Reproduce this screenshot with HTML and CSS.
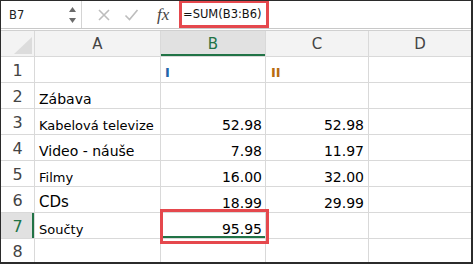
FILE: index.html
```html
<!DOCTYPE html>
<html lang="cs">
<head>
    <meta charset="UTF-8">
    <meta name="viewport" content="width=device-width, initial-scale=1.0">
    <title>Součty</title>
    <link rel="stylesheet" href="styles.css">
</head>
<body>
    <div class="sheet">
        <div class="formula-bar">
            <div class="name-box">
                <span class="name">B7</span>
                <svg class="spin" width="9" height="18" viewBox="0 0 9 18">
                    <path d="M4.5 1 L8 6 L1 6 Z" fill="#6b6b6b"/>
                    <path d="M1 12 L8 12 L4.5 17 Z" fill="#6b6b6b"/>
                </svg>
            </div>
            <div class="tools">
                <svg class="icon" width="14" height="14" viewBox="0 0 14 14">
                    <path d="M2 2 L12 12 M12 2 L2 12" stroke="#bdbdbd" stroke-width="1.6" fill="none"/>
                </svg>
                <svg class="icon" width="15" height="14" viewBox="0 0 15 14">
                    <path d="M1.5 7.5 L5.5 11.5 L13.5 2" stroke="#bdbdbd" stroke-width="1.6" fill="none"/>
                </svg>
                <span class="fx">fx</span>
            </div>
            <div class="formula">
                <span class="formula-text">=SUM(B3:B6)</span>
            </div>
        </div>

        <div class="grid">
            <div class="corner">
                <svg width="18" height="17" viewBox="0 0 18 17"><path d="M18 0 L18 17 L0 17 Z" fill="#dcdcdc"/></svg>
            </div>
            <div class="ch">A</div>
            <div class="ch active">B</div>
            <div class="ch">C</div>
            <div class="ch">D</div>

            <div class="rh">1</div>
            <div class="c"></div>
            <div class="c"><span class="mark-1">I</span></div>
            <div class="c"><span class="mark-2">II</span></div>
            <div class="c"></div>

            <div class="rh">2</div>
            <div class="c">Zábava</div>
            <div class="c"></div>
            <div class="c"></div>
            <div class="c"></div>

            <div class="rh">3</div>
            <div class="c small">Kabelová televize</div>
            <div class="c num">52.98</div>
            <div class="c num col-c">52.98</div>
            <div class="c"></div>

            <div class="rh">4</div>
            <div class="c">Video - náuše</div>
            <div class="c num">7.98</div>
            <div class="c num col-c">11.97</div>
            <div class="c"></div>

            <div class="rh">5</div>
            <div class="c small">Filmy</div>
            <div class="c num">16.00</div>
            <div class="c num col-c">32.00</div>
            <div class="c"></div>

            <div class="rh">6</div>
            <div class="c big">CDs</div>
            <div class="c num">18.99</div>
            <div class="c num col-c">29.99</div>
            <div class="c"></div>

            <div class="rh active">7</div>
            <div class="c small">Součty</div>
            <div class="c num selected">95.95<span class="highlight"></span></div>
            <div class="c"></div>
            <div class="c"></div>

            <div class="rh">8</div>
            <div class="c"></div>
            <div class="c"></div>
            <div class="c"></div>
            <div class="c"></div>
        </div>
    </div>
</body>
</html>
```

FILE: styles.css
```css
body {
    margin: 0;
    background: #fff;
    font-family: 'DejaVu Sans', sans-serif;
}
.sheet {
    width: 473px;
    height: 264px;
    box-sizing: border-box;
    border: 1px solid #2b2b2b;
    border-right-width: 2px;
    border-bottom-width: 2px;
    background: #fff;
}
.formula-bar {
    display: flex;
    height: 27px;
    border-bottom: 1px solid #c8c8c8;
    margin-bottom: 1px;
}
.name-box {
    width: 81px;
    display: flex;
    align-items: center;
    justify-content: space-between;
    padding: 0 4px 0 8px;
    box-sizing: border-box;
    border-right: 1px solid #d4d4d4;
}
.name {
    font-size: 11.5px;
    color: #222;
}
.tools {
    width: 93px;
    display: flex;
    align-items: center;
    padding-left: 15px;
    box-sizing: border-box;
    gap: 13px;
}
.fx {
    font-family: 'Liberation Serif', serif;
    font-style: italic;
    font-size: 17px;
    color: #444;
    margin-left: 5px;
}
.formula {
    flex: 1;
    display: flex;
    align-items: stretch;
    padding-left: 4px;
}
.formula-text {
    display: flex;
    align-items: center;
    border: 3px solid #e5484d;
    border-top-width: 2px;
    padding: 0 4px 0 1px;
    font-size: 11.5px;
    color: #111;
}
.grid {
    display: grid;
    grid-template-columns: 33px 125px 104px 102px 102px;
    grid-template-rows: repeat(8, 25px) 23px;
    gap: 1px;
    background: #d9d9d9;
    border-top: 1px solid #d0d0d0;
}
.corner {
    background: #f3f3f3;
    display: flex;
    align-items: flex-end;
    justify-content: flex-end;
    padding: 0 2px 2px 0;
}
.ch {
    background: #f3f3f3;
    display: flex;
    align-items: center;
    justify-content: center;
    font-size: 15px;
    color: #444;
}
.ch.active {
    background: #e1e1e1;
    color: #217346;
    box-shadow: inset 0 -2px 0 #217346;
}
.rh {
    background: #fff;
    display: flex;
    align-items: center;
    justify-content: center;
    font-size: 16px;
    color: #444;
    padding-top: 2px;
}
.rh.active {
    background: #e1e1e1;
    color: #217346;
    box-shadow: inset -2px 0 0 #217346;
}
.c {
    background: #fff;
    display: flex;
    align-items: flex-end;
    padding: 0 4px 2px 4px;
    line-height: 1;
    font-size: 14px;
    color: #000;
    white-space: nowrap;
}
.c.small {
    font-size: 13px;
}
.c.big {
    font-size: 15px;
}
.num {
    justify-content: flex-end;
    padding-right: 3px;
    font-size: 14px;
}
.num.col-c {
    padding-right: 4px;
}
.mark-1 {
    color: #2364aa;
    font-size: 13px;
    font-weight: bold;
    padding-bottom: 1px;
}
.mark-2 {
    color: #b86b12;
    font-size: 13px;
    font-weight: bold;
    padding-bottom: 1px;
    padding-left: 1px;
}
.selected {
    position: relative;
    box-shadow: inset 0 -2px 0 #217346;
}
.highlight {
    position: absolute;
    left: -1px;
    top: -4px;
    right: -4px;
    bottom: -6px;
    border: 3px solid #e5484d;
    z-index: 2;
}
```
